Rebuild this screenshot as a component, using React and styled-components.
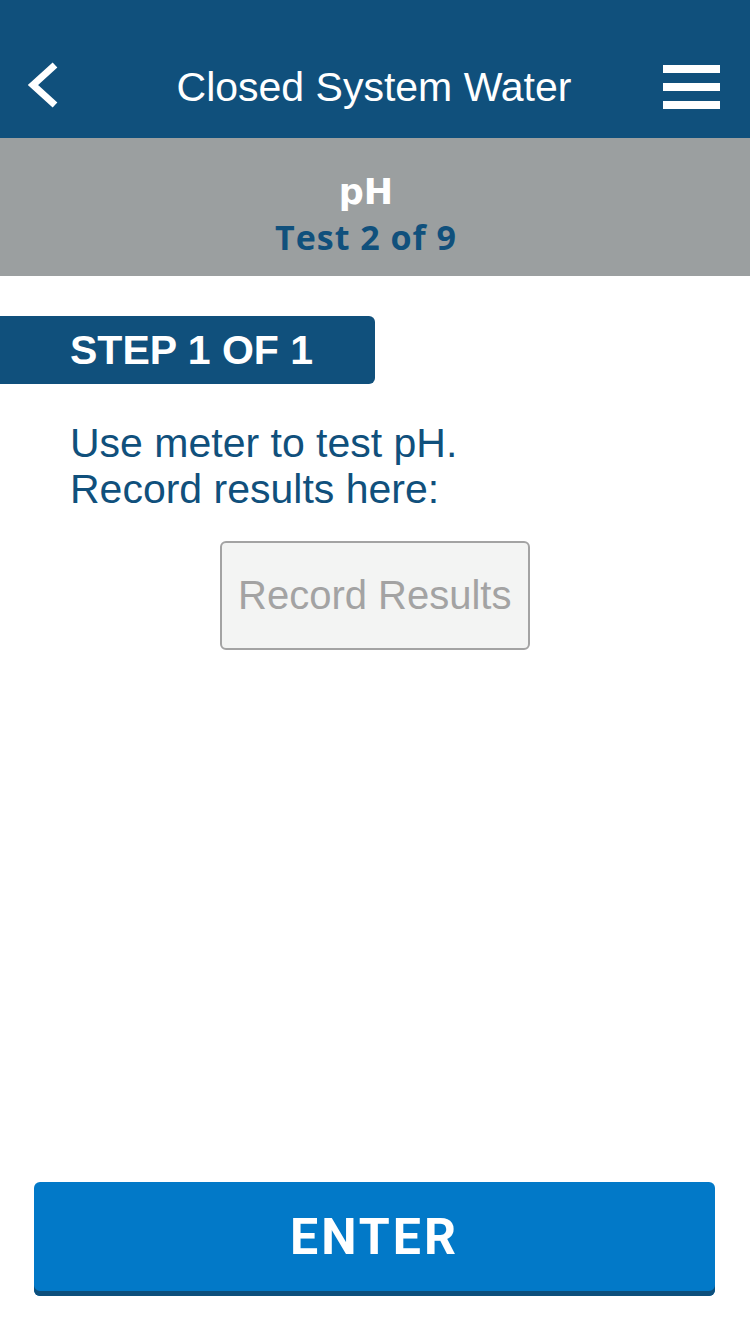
import React from "react";
import styled, { createGlobalStyle } from "styled-components";

const GlobalStyle = createGlobalStyle`
  html, body {
    margin: 0;
    padding: 0;
    background: #ffffff;
  }
  * {
    box-sizing: border-box;
  }
`;

const App = () => {
  return (
    <>
      <GlobalStyle />
      <Screen>
        <TopBar>
          <IconButton aria-label="Back">
            <svg width="34" height="46" viewBox="0 0 34 46">
              <path
                d="M29 3 L7 23 L29 43"
                fill="none"
                stroke="#ffffff"
                strokeWidth="7"
                strokeLinecap="butt"
                strokeLinejoin="miter"
              />
            </svg>
          </IconButton>
          <Title>Closed System Water</Title>
          <MenuButton aria-label="Menu">
            <MenuBar />
            <MenuBar />
            <MenuBar />
          </MenuButton>
        </TopBar>

        <TestBand>
          <TestName>pH</TestName>
          <TestCount>Test 2 of 9</TestCount>
        </TestBand>

        <Content>
          <StepBadge>STEP 1 OF 1</StepBadge>
          <Instructions>
            Use meter to test pH.
            <br />
            Record results here:
          </Instructions>
          <ResultField placeholder="Record Results" />
        </Content>

        <Footer>
          <EnterButton>ENTER</EnterButton>
        </Footer>
      </Screen>
    </>
  );
};

export default App;

const Screen = styled.div`
  width: 750px;
  height: 1334px;
  display: flex;
  flex-direction: column;
  background: #ffffff;
  overflow: hidden;
`;

const TopBar = styled.header`
  height: 138px;
  background: #10507c;
  display: flex;
  align-items: center;
  justify-content: space-between;
  padding: 36px 30px 0 23px;
`;

const IconButton = styled.button`
  width: 40px;
  height: 50px;
  padding: 0;
  border: none;
  background: transparent;
  display: flex;
  align-items: center;
  justify-content: center;
  margin-top: -4px;
`;

const Title = styled.h1`
  margin: 0;
  flex: 1;
  text-align: center;
  font-family: "Liberation Sans", Arial, sans-serif;
  font-weight: 400;
  font-size: 41px;
  color: #ffffff;
  padding-left: 22px;
`;

const MenuButton = styled.button`
  width: 57px;
  padding: 0;
  border: none;
  background: transparent;
  display: flex;
  flex-direction: column;
  gap: 10px;
`;

const MenuBar = styled.span`
  display: block;
  height: 8px;
  width: 57px;
  background: #ffffff;
`;

const TestBand = styled.section`
  height: 138px;
  background: #9b9fa0;
  display: flex;
  flex-direction: column;
  align-items: center;
  padding: 34px 18px 0 0;
`;

const TestName = styled.div`
  font-family: "DejaVu Sans", sans-serif;
  font-weight: 700;
  font-size: 35px;
  line-height: 40px;
  color: #ffffff;
`;

const TestCount = styled.div`
  margin-top: 5px;
  font-family: "Open Sans", sans-serif;
  font-weight: 700;
  font-size: 34px;
  line-height: 40px;
  letter-spacing: 1px;
  color: #10507c;
`;

const Content = styled.main`
  flex: 1;
  display: flex;
  flex-direction: column;
  padding-top: 40px;
`;

const StepBadge = styled.div`
  width: 375px;
  height: 68px;
  background: #10507c;
  border-radius: 0 6px 6px 0;
  display: flex;
  align-items: center;
  padding-left: 70px;
  font-family: "Liberation Sans", Arial, sans-serif;
  font-weight: 700;
  font-size: 41px;
  color: #ffffff;
`;

const Instructions = styled.p`
  margin: 36px 0 0 70px;
  font-family: "Liberation Sans", Arial, sans-serif;
  font-size: 41px;
  line-height: 46px;
  color: #10507c;
`;

const ResultField = styled.input`
  align-self: center;
  margin-top: 29px;
  width: 310px;
  height: 109px;
  border: 2px solid #a3a3a3;
  border-radius: 6px;
  background: #f3f4f3;
  padding: 0 0 0 16px;
  font-family: "Liberation Sans", Arial, sans-serif;
  font-size: 40px;
  color: #555555;
  outline: none;

  &::placeholder {
    color: #a3a3a3;
  }
`;

const Footer = styled.footer`
  padding: 0 35px 38px 34px;
`;

const EnterButton = styled.button`
  width: 100%;
  height: 114px;
  border: none;
  border-radius: 6px;
  background: #0279c8;
  box-shadow: inset 0 -5px 0 #0d4f7c;
  padding: 0 0 5px;
  font-family: Roboto, sans-serif;
  font-weight: 700;
  font-size: 50px;
  letter-spacing: 3px;
  color: #ffffff;
`;
